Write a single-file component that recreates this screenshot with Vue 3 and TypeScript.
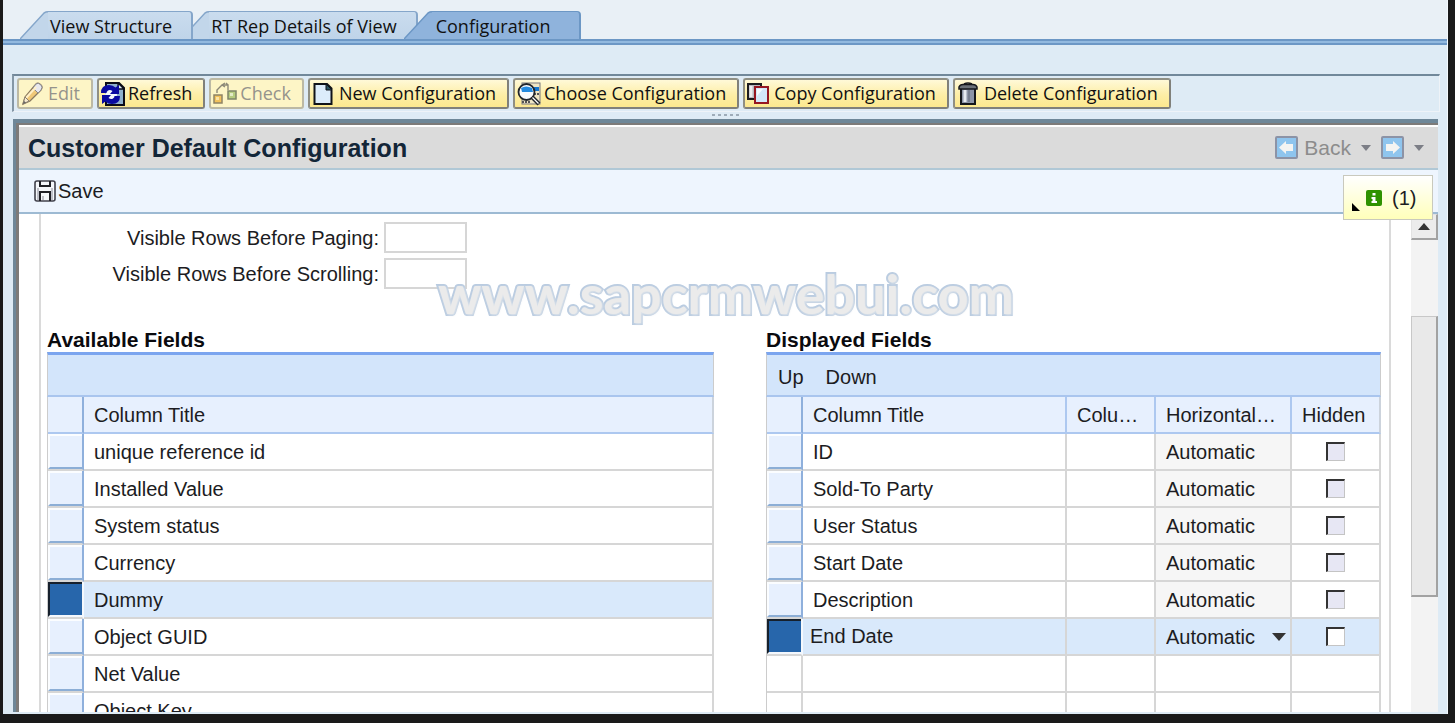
<script setup lang="ts">
import { ref } from 'vue'

interface Tool {
  id: string
  label: string
  disabled?: boolean
}

interface DisplayedField {
  title: string
  mode: string
  hidden: boolean
}

const tabs: string[] = ['View Structure', 'RT Rep Details of View', 'Configuration']
const activeTab = ref(2)

const tools: Tool[] = [
  { id: 'edit', label: 'Edit', disabled: true },
  { id: 'refresh', label: 'Refresh' },
  { id: 'check', label: 'Check', disabled: true },
  { id: 'new', label: 'New Configuration' },
  { id: 'choose', label: 'Choose Configuration' },
  { id: 'copy', label: 'Copy Configuration' },
  { id: 'delete', label: 'Delete Configuration' },
]

const available: string[] = [
  'unique reference id',
  'Installed Value',
  'System status',
  'Currency',
  'Dummy',
  'Object GUID',
  'Net Value',
  'Object Key',
]
const selectedAvailable = ref(4)

const displayed = ref<DisplayedField[]>([
  { title: 'ID', mode: 'Automatic', hidden: false },
  { title: 'Sold-To Party', mode: 'Automatic', hidden: false },
  { title: 'User Status', mode: 'Automatic', hidden: false },
  { title: 'Start Date', mode: 'Automatic', hidden: false },
  { title: 'Description', mode: 'Automatic', hidden: false },
  { title: 'End Date', mode: 'Automatic', hidden: false },
])
const selectedDisplayed = ref(5)

const rowsPaging = ref('')
const rowsScrolling = ref('')
</script>

<template>
  <div class="desktop">
    <main class="window">
      <nav class="tabs" role="tablist">
        <button
          v-for="(tab, i) in tabs"
          :key="tab"
          type="button"
          role="tab"
          class="tab"
          :class="{ active: i === activeTab }"
          :aria-selected="i === activeTab"
          @click="activeTab = i"
        >
          <svg class="slant" width="28" height="28" viewBox="0 0 28 28" aria-hidden="true">
            <path class="slant-fill" d="M0 28 L24 2 Q26 0 28 0 V28 Z" />
            <path class="slant-line" d="M0 28 L24 2 Q26 .8 28 .8" fill="none" />
          </svg>
          <span class="tab-label">{{ tab }}</span>
        </button>
      </nav>

      <div class="toolbar" role="toolbar">
        <button v-for="t in tools" :key="t.id" type="button" class="tool" :disabled="t.disabled">
          <svg v-if="t.id === 'edit'" width="24" height="24" viewBox="0 0 24 24">
            <path d="M2 22 L4 15 L15 2 Q17 0 20 3 Q22 5 20 8 L9 19 Z" fill="#f0c878" stroke="#8a7a60" stroke-width="1.3" />
            <path d="M15 2 Q17 0 20 3 Q22 5 20 8 L17 11 L12 6 Z" fill="#e8e8ee" stroke="#8a8a90" />
            <path d="M5 16 L15 5" stroke="#fff0c8" stroke-width="2" />
            <path d="M2 22 L4 15 L8 19 Z" fill="#f8ecd0" stroke="#8a8070" />
            <path d="M2 22 L3 19 L5 20.500 Z" fill="#666" />
          </svg>
          <svg v-else-if="t.id === 'refresh'" width="24" height="24" viewBox="0 0 24 24">
            <path d="M5 1 H18 L23 6 V23 H5 Z" fill="#8fb0cc" stroke="#0c0c18" stroke-width="2" />
            <path d="M17 1 V7 H23 Z" fill="#dfeefa" stroke="#0c0c18" stroke-width="1.3" />
            <ellipse cx="10" cy="12.500" rx="6" ry="6" fill="#f4f8fc" />
            <path d="M0 11 Q0 3 8 3 Q12 3 14.500 5.500 L18 3 V12 H9 L11.500 9 Q9 7.500 7 8.500 Q5.500 9.500 5.500 11 Z" fill="#0a0aa0" />
            <path d="M19 14 Q19 22 11 22 Q7 22 4.500 19.500 L1 22 V13 H10 L7.500 16 Q10 17.800 12 16.500 Q13.500 15.500 13.500 14 Z" fill="#0a0aa0" />
          </svg>
          <svg v-else-if="t.id === 'check'" width="24" height="24" viewBox="0 0 24 24">
            <path d="M4 11 V8 L9 3 H15 V8 M12 1 L9 3 L12 5 M13 1 L15 3" fill="none" stroke="#8c8878" stroke-width="1.4" />
            <rect x="1" y="13" width="8" height="8" fill="#f2c25c" stroke="#8f8466" stroke-width="1.5" />
            <rect x="3" y="15" width="3" height="3" fill="#fbe3a6" />
            <rect x="15" y="9" width="8" height="8" fill="#b6cc80" stroke="#7d8468" stroke-width="1.500" />
            <rect x="17" y="11" width="3" height="3" fill="#e2ecc6" />
          </svg>
          <svg v-else-if="t.id === 'new'" width="24" height="24" viewBox="0 0 24 24">
            <path d="M2.500 2 H15 L19.500 6.500 V22 H2.500 Z" fill="#dcecfb" stroke="#10131a" stroke-width="2" />
            <path d="M14 2 V8 H20 Z" fill="#2b5563" stroke="#10131a" />
          </svg>
          <svg v-else-if="t.id === 'choose'" width="24" height="24" viewBox="0 0 24 24">
            <rect x="5" y="1" width="18" height="21" fill="#efe6c4" stroke="#77777c" />
            <path d="M15 5 H22 V9 H15 Z" fill="#1477cf" />
            <path d="M17 12 H22 M5 20 H14" stroke="#555" stroke-width="2" stroke-dasharray="2 1" />
            <circle cx="9.500" cy="10" r="8" fill="#f8fbfd" stroke="#20252a" stroke-width="1.800" />
            <path d="M4 6 Q9 3 15 6 L16 10 H5 Z" fill="#258bdf" />
            <path d="M15 15 L22 22" stroke="#20252a" stroke-width="4" />
            <path d="M15.500 15.500 L21.500 21.500" stroke="#fff" stroke-width="1.3" />
          </svg>
          <svg v-else-if="t.id === 'copy'" width="24" height="24" viewBox="0 0 24 24">
            <rect x="1" y="2" width="13" height="15" fill="#b8b8c0" stroke="#1c1c20" stroke-width="2" />
            <path d="M4 4 V15" stroke="#ececf0" stroke-width="3" />
            <rect x="8" y="5" width="13" height="16" fill="#d3e7fa" stroke="#961622" stroke-width="2" />
            <path d="M10 7 H16 L10 14 Z" fill="#f4faff" />
          </svg>
          <svg v-else width="24" height="24" viewBox="0 0 24 24">
            <path d="M4 6 H18 V22 H4 Z" fill="#8d95a8" stroke="#15171c" stroke-width="2" />
            <path d="M8 8 V20" stroke="#e6eaf2" stroke-width="3" />
            <path d="M12 8 V20" stroke="#5e6678" stroke-width="1" />
            <path d="M2 5 Q3 2.500 6 2.500 H16 Q19 2.500 20 5 V7 H2 Z" fill="#6b7178" stroke="#15171c" stroke-width="1.500" />
            <path d="M7 2 Q11 0 15 2" fill="none" stroke="#15171c" stroke-width="1.500" />
          </svg>
          <span>{{ t.label }}</span>
        </button>
      </div>

      <div class="splitter" aria-hidden="true"><i v-for="n in 5" :key="n"></i></div>

      <section class="panel">
        <header class="panel-title">
          <h1>Customer Default Configuration</h1>
          <div class="history">
            <button type="button" class="nav-btn">
              <svg width="23" height="23" viewBox="0 0 23 23" aria-hidden="true">
                <rect x="1" y="1" width="21" height="21" rx="1" fill="#8fc5ee" stroke="#8c93a6" stroke-width="2" />
                <path d="M4 11.500 L11 5 V8 H18 V15 H11 V18 Z" fill="#f4f4f2" />
              </svg>
              <span>Back</span>
            </button>
            <button type="button" class="nav-btn" aria-label="Back history">
              <svg width="10" height="6" viewBox="0 0 10 6"><path d="M0 0 H10 L5 6 Z" fill="#7c7e86" /></svg>
            </button>
            <button type="button" class="nav-btn" aria-label="Forward">
              <svg width="23" height="23" viewBox="0 0 23 23">
                <rect x="1" y="1" width="21" height="21" rx="1" fill="#8fc5ee" stroke="#8c93a6" stroke-width="2" />
                <path d="M19 11.500 L12 5 V8 H5 V15 H12 V18 Z" fill="#f4f4f2" />
              </svg>
            </button>
            <button type="button" class="nav-btn" aria-label="Forward history">
              <svg width="10" height="6" viewBox="0 0 10 6"><path d="M0 0 H10 L5 6 Z" fill="#7c7e86" /></svg>
            </button>
          </div>
        </header>

        <div class="actions">
          <button type="button" class="save">
            <svg width="22" height="22" viewBox="0 0 22 22" aria-hidden="true">
              <path d="M3 1 H19 Q21 1 21 3 V19 Q21 21 19 21 H3 Q1 21 1 19 V3 Q1 1 3 1 Z" fill="#f5f7fb" stroke="#41414c" stroke-width="1.600" />
              <path d="M6 1 V6 H16 V1 M6 21 V12 H16 V21" fill="none" stroke="#202026" stroke-width="2" />
              <path d="M9 20 V16 M4 8 V20 M18 8 V20" stroke="#8a8a96" stroke-width="1" />
            </svg>
            <span>Save</span>
          </button>
          <button type="button" class="messages">
            <svg width="8" height="8" viewBox="0 0 8 8" class="corner" aria-hidden="true"><path d="M0 0 L8 8 H0 Z" fill="#000" /></svg>
            <svg width="16" height="16" viewBox="0 0 16 16" aria-hidden="true">
              <rect width="16" height="16" rx="2" fill="#2f9200" />
              <path d="M6.500 3 H9.500 V5.500 H6.500 Z M5.500 7 H9.500 V11 H11 V13 H5.500 V11 H6.500 V9 H5.500 Z" fill="#fff" />
            </svg>
            <span>(1)</span>
          </button>
        </div>

        <div class="scroll-area">
          <div class="sheet">
            <div class="form">
              <label for="rows-paging">Visible Rows Before Paging:</label>
              <input id="rows-paging" v-model="rowsPaging" type="text" />
              <label for="rows-scrolling">Visible Rows Before Scrolling:</label>
              <input id="rows-scrolling" v-model="rowsScrolling" type="text" />
            </div>

            <div class="lists">
              <section>
                <h2>Available Fields</h2>
                <div class="grid-bar"></div>
                <table>
                  <colgroup><col class="c-mark" /><col /></colgroup>
                  <thead>
                    <tr><th class="mark"></th><th>Column Title</th></tr>
                  </thead>
                  <tbody>
                    <tr v-for="(f, i) in available" :key="f" :class="{ selected: i === selectedAvailable }">
                      <td class="mark"><button type="button" :aria-label="f" @click="selectedAvailable = i"></button></td>
                      <td>{{ f }}</td>
                    </tr>
                  </tbody>
                </table>
              </section>

              <section>
                <h2>Displayed Fields</h2>
                <div class="grid-bar">
                  <button type="button">Up</button>
                  <button type="button">Down</button>
                </div>
                <table>
                  <colgroup>
                    <col class="c-mark" /><col /><col class="c-small" /><col class="c-mode" /><col class="c-small" />
                  </colgroup>
                  <thead>
                    <tr>
                      <th class="mark"></th>
                      <th>Column Title</th>
                      <th>Colu…</th>
                      <th>Horizontal…</th>
                      <th>Hidden</th>
                    </tr>
                  </thead>
                  <tbody>
                    <tr v-for="(f, i) in displayed" :key="i" :class="{ selected: i === selectedDisplayed }">
                      <td class="mark"><button type="button" :aria-label="f.title" @click="selectedDisplayed = i"></button></td>
                      <td v-if="i === selectedDisplayed" class="edit">
                        <input v-model="f.title" type="text" aria-label="Column Title" />
                      </td>
                      <td v-else>{{ f.title }}</td>
                      <td></td>
                      <td v-if="i === selectedDisplayed" class="mode pick">
                        <select v-model="f.mode" aria-label="Horizontal Alignment">
                          <option>Automatic</option>
                        </select>
                        <svg width="14" height="8" viewBox="0 0 14 8" aria-hidden="true"><path d="M0 0 H14 L7 8 Z" fill="#333" /></svg>
                      </td>
                      <td v-else class="mode">{{ f.mode }}</td>
                      <td class="tick">
                        <input v-model="f.hidden" type="checkbox" aria-label="Hidden" :disabled="i !== selectedDisplayed" />
                      </td>
                    </tr>
                    <tr v-for="n in 2" :key="'blank' + n">
                      <td></td><td></td><td></td><td></td><td></td>
                    </tr>
                  </tbody>
                </table>
              </section>
            </div>
            <div class="watermark">www.sapcrmwebui.com</div>
          </div>

          <div class="scrollbar">
            <button type="button" class="scroll-up" aria-label="Scroll up">
              <svg width="12" height="7" viewBox="0 0 12 7"><path d="M0 7 L6 0 L12 7 Z" fill="#333" /></svg>
            </button>
            <div class="track"><div class="thumb"></div></div>
          </div>
        </div>
      </section>
    </main>
  </div>
</template>

<style>
body {
  margin: 0;
  background: #1a1a1a;
}
</style>

<style scoped>
* {
  box-sizing: border-box;
}

button,
input,
select {
  font: inherit;
  color: inherit;
  margin: 0;
}

button {
  padding: 0;
  border: 0;
  background: none;
}

svg {
  display: block;
  flex: none;
}

.desktop {
  height: 100vh;
  padding: 0 7px 9px 3px;
  overflow: hidden;
  background: #1a1a1a;
  font: 20px/24px "Liberation Sans", Arial, sans-serif;
  color: #1c1c22;
}

.window {
  display: flex;
  flex-direction: column;
  height: 100%;
  overflow: hidden;
  background: #deebf5;
  border-right: 1px solid #f4f9fd;
}

.tabs {
  display: flex;
  flex: none;
  height: 45px;
  padding: 11px 0 0 17px;
  background: linear-gradient(#6c97c5 0 2px, #92b9df 2px 4px, #6c97c5 4px 6px) bottom / 100% 6px no-repeat, #e9f0f6;
  font: 18px/28px "Open Sans", "Noto Sans", sans-serif;
}

.tab {
  display: flex;
  position: relative;
  height: 28px;
  color: #111;
}

.tab:nth-child(1) {
  z-index: 2;
}

.tab:nth-child(2) {
  margin-left: -12px;
}

.tab:nth-child(3) {
  margin-left: -14px;
  z-index: 3;
}

.slant-fill {
  fill: #c2d6ea;
}

.slant-line {
  stroke: #85a6ca;
  stroke-width: 1.5;
}

.tab-label {
  height: 28px;
  padding: 0 19px 0 2px;
  border: solid #85a6ca;
  border-width: 1px 2px 0 0;
  border-radius: 0 4px 0 0;
  background: linear-gradient(#cadcee, #bfd4e9);
}

.active .tab-label {
  padding: 0 29px 0 4px;
  border-color: #6c97c5;
  background: #8fb3dc;
}

.active .slant-fill {
  fill: #8fb3dc;
}

.active .slant-line {
  stroke: #6c97c5;
}

.toolbar {
  display: flex;
  flex: none;
  gap: 4px;
  height: 38px;
  margin: 29px 7px 0 9px;
  padding: 2px 3px;
  border: solid;
  border-width: 2px 1px 1px 2px;
  border-color: #71889a #eef3f8 #eef3f8 #8497a6;
  font: 18px/27px "Open Sans", "Noto Sans", sans-serif;
  color: #111;
}

.tool {
  display: flex;
  align-items: center;
  gap: 3px;
  height: 31px;
  padding: 0 11px 0 2px;
  border: 2px solid;
  border-color: #8f8f84 #80807a #80807a #8f8f84;
  border-radius: 3px;
  background: linear-gradient(#fff9d8, #fdeea6 55%, #fce88f);
  white-space: nowrap;
}

.tool:disabled {
  border-color: #bcb9a4;
  background: #fdf5c6;
  color: #95938c;
}

.splitter {
  display: flex;
  flex: none;
  justify-content: center;
  gap: 3px;
  height: 7px;
  padding-top: 2px;
}

.splitter i {
  width: 3px;
  height: 2px;
  background: #9eacb9;
}

.panel {
  display: flex;
  flex: 1;
  flex-direction: column;
  min-height: 0;
  margin: 0 9px 2px 10px;
  border: solid;
  border-width: 4px 0 0 3px;
  border-color: #6e8798;
  box-shadow: inset 3px 2px #7d7b79;
  padding: 2px 0 0 3px;
  background: #fff;
}

.panel-title {
  display: flex;
  flex: none;
  align-items: center;
  justify-content: space-between;
  height: 45px;
  padding: 0 14px 0 9px;
  border-top: 2px solid #fff;
  border-bottom: 2px solid #b0c8d6;
  background: #dbdbdb;
}

h1 {
  margin: 0;
  font: bold 25px/32px "Liberation Sans", Arial, sans-serif;
  color: #132638;
}

.history {
  display: flex;
  align-items: center;
  gap: 10px;
  font-size: 21px;
  color: #8c8c8c;
}

.nav-btn {
  display: flex;
  align-items: center;
  gap: 6px;
}

.actions {
  display: flex;
  flex: none;
  align-items: center;
  position: relative;
  height: 44px;
  padding-left: 15px;
  border-bottom: 2px solid #9dbad3;
  background: #eef5fe;
}

.save {
  display: flex;
  align-items: center;
  gap: 2px;
}

.messages {
  display: flex;
  align-items: center;
  position: absolute;
  z-index: 5;
  top: 5px;
  right: 5px;
  width: 90px;
  height: 45px;
  padding-left: 8px;
  border: 1px solid #c9c9bd;
  background: linear-gradient(#fff, #ffffe4 40%, #ffffba);
}

.corner {
  align-self: flex-end;
  margin-bottom: 8px;
  margin-right: 6px;
}

.messages span {
  margin-left: 10px;
}

.scroll-area {
  display: flex;
  flex: 1;
  min-height: 0;
}

.sheet {
  flex: 1;
  position: relative;
  min-width: 0;
  margin: 0 20px 0 20px;
  padding: 8px 8px 0 6px;
  border: solid #dadada;
  border-width: 0 2px;
  overflow: hidden;
}

.form {
  display: grid;
  grid-template-columns: 332px 83px;
  grid-auto-rows: 31px;
  gap: 5px;
  align-items: center;
  text-align: right;
}

.form input {
  width: 83px;
  height: 31px;
  border: 2px solid #d6d6d6;
  background: #fff;
}

.lists {
  display: grid;
  grid-template-columns: 667fr 615fr;
  gap: 52px;
  margin-top: 39px;
}

h2 {
  margin: 0;
  font: bold 21px/24px "Liberation Sans", Arial, sans-serif;
  color: #0a0a0e;
}

.grid-bar {
  display: flex;
  align-items: center;
  gap: 22px;
  height: 45px;
  padding: 4px 0 0 11px;
  border: solid #cccccc;
  border-width: 3px 1px 2px;
  border-top-color: #7ba5ef;
  border-bottom-color: #a9c5ee;
  background: #d3e5fb;
}

table {
  width: 100%;
  table-layout: fixed;
  border-collapse: separate;
  border-spacing: 0;
  border-left: 1px solid #ccc;
}

.c-mark {
  width: 36px;
}

.c-small {
  width: 89px;
}

.c-mode {
  width: 136px;
}

th,
td {
  height: 37px;
  padding: 0 0 0 10px;
  border-right: 2px solid #d6d6d6;
  border-bottom: 2px solid #d6d6d6;
  text-align: left;
  font-weight: normal;
  white-space: nowrap;
}

th {
  border-right-color: #adc8f0;
  border-bottom-color: #adc8f0;
  background: #e7f0fe;
}

th:last-child {
  border-right-color: #ccd3dc;
}

.mark {
  padding: 0;
  border-right-color: #8fb0dc;
}

.mark button {
  display: block;
  width: 100%;
  height: 35px;
  border: solid;
  border-width: 2px 0 2px 2px;
  border-color: #fbfdff #fbfdff #8caed6 #fbfdff;
  background: #e7f0fe;
}

.selected td {
  background: #d9e9fb;
}

.selected .mark {
  border-right-color: #f4f8fd;
}

.selected .mark button {
  border-color: #16202c #16202c #f4f8fd #16202c;
  background: #2766ab;
}

.mode {
  background: #f6f6f6;
}

.edit {
  padding-left: 7px;
}

.edit input {
  display: block;
  width: 100%;
  height: 35px;
  padding: 0;
  border: 0;
  background: none;
}

.pick > * {
  display: inline-block;
  vertical-align: middle;
}

.pick select {
  width: 106px;
  height: 33px;
  padding: 0;
  border: 0;
  appearance: none;
  background: none;
}

.tick {
  padding: 0;
  text-align: center;
}

.tick input {
  display: block;
  width: 19px;
  height: 19px;
  margin: 0 auto;
  border: solid;
  border-width: 2px 1px 1px 2px;
  border-color: #333 #c4c4c4 #c4c4c4 #333;
  appearance: none;
  background: #fff;
}

.tick input:disabled {
  background: #e7e7f4;
}

.watermark {
  position: absolute;
  top: 44px;
  left: 397px;
  font: bold 54px/72px Lato, "Open Sans", sans-serif;
  color: #ebebeb;
  paint-order: stroke fill;
  -webkit-text-stroke: 4px #b9cbe0;
  text-shadow: 1px 1px 3px #e4e8ec;
  pointer-events: none;
}

.scrollbar {
  display: flex;
  flex: none;
  flex-direction: column;
  width: 27px;
  background: #f3f3f3;
}

.scroll-up {
  display: flex;
  flex: none;
  align-items: center;
  justify-content: center;
  height: 26px;
  border: solid;
  border-width: 1px 2px 2px 1px;
  border-color: #e2e2e2 #a2a2a2 #a2a2a2 #e2e2e2;
  background: #ececec;
}

.track {
  flex: 1;
  padding-top: 76px;
}

.thumb {
  height: 281px;
  border: solid;
  border-width: 1px 2px 2px 1px;
  border-color: #c8c8c8 #a2a2a2 #a2a2a2 #c8c8c8;
  background: #e9e9e9;
}
</style>
